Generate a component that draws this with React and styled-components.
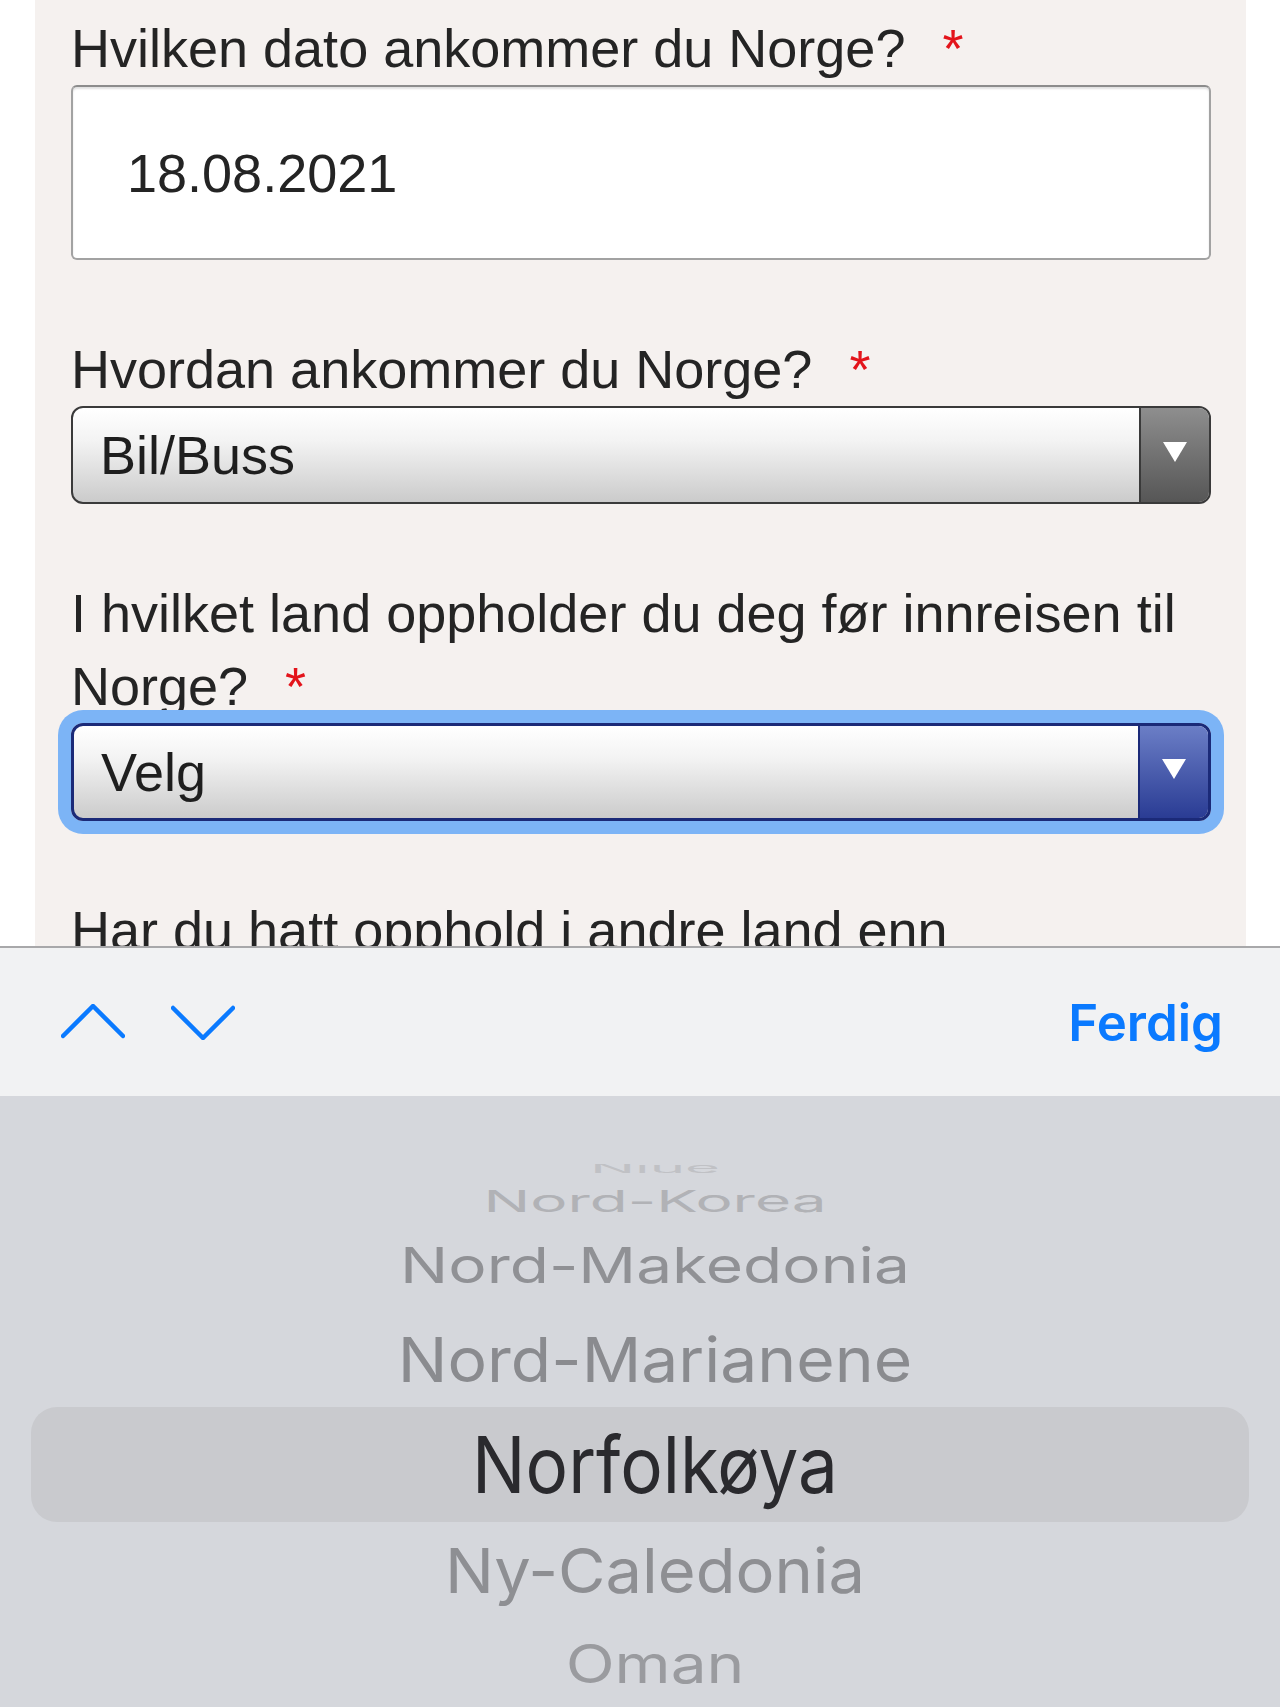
import React from "react";
import styled, { createGlobalStyle } from "styled-components";

const GlobalStyle = createGlobalStyle`
  html, body {
    margin: 0;
    padding: 0;
    background: #ffffff;
  }
  * {
    box-sizing: border-box;
  }
`;

// Screen layout
const Screen = styled.div`
  width: 1280px;
  height: 1707px;
  display: flex;
  flex-direction: column;
  overflow: hidden;
  background: #ffffff;
`;

const FormArea = styled.div`
  height: 946px;
  flex-shrink: 0;
  overflow: hidden;
  padding: 0 34px 0 35px;
`;

const Panel = styled.div`
  background: #f5f1ef;
  min-height: 100%;
  padding: 12px 35px 0 36px;
  display: flex;
  flex-direction: column;
  gap: 73px;
  font-family: "Liberation Sans", Arial, sans-serif;
  color: #242424;
`;

const Field = styled.div`
  display: flex;
  flex-direction: column;
`;

const Label = styled.div`
  font-size: 54px;
  line-height: 73px;
`;

const Req = styled.span`
  color: #e3141b;
  margin-left: 37px;
`;

const TextInput = styled.div`
  height: 175px;
  background: #ffffff;
  border: 2px solid #a2a2a2;
  border-top-color: #8c8c8c;
  border-radius: 6px;
  box-shadow: inset 0 2px 2px rgba(0, 0, 0, 0.12);
  display: flex;
  align-items: center;
  padding-left: 54px;
  font-size: 54px;
`;

const SelectBox = styled.div`
  height: 98px;
  display: flex;
  align-items: stretch;
  border: ${(p) => (p.$focused ? "3px solid #1b2a78" : "2px solid #3a3a3a")};
  border-radius: 12px;
  overflow: hidden;
  background: linear-gradient(#ffffff 0%, #f3f3f3 35%, #cbcbcb 100%);
  box-shadow: ${(p) => (p.$focused ? "0 0 0 13px #7cb4f6" : "none")};
`;

const SelectValue = styled.div`
  flex: 1;
  display: flex;
  align-items: center;
  padding-left: 27px;
  font-size: 54px;
  color: #1e1e1e;
`;

const ArrowCap = styled.div`
  width: 70px;
  flex-shrink: 0;
  display: flex;
  align-items: center;
  justify-content: center;
  border-left: 2px solid ${(p) => (p.$focused ? "#1b2a78" : "#3a3a3a")};
  background: ${(p) =>
    p.$focused
      ? "linear-gradient(#6b7ec6, #2a3c94)"
      : "linear-gradient(#8e8e8e, #565656)"};

  &::after {
    content: "";
    width: 0;
    height: 0;
    border-left: 12px solid transparent;
    border-right: 12px solid transparent;
    border-top: 20px solid #ffffff;
    margin-top: -6px;
  }
`;

// Keyboard accessory bar
const Toolbar = styled.div`
  height: 150px;
  flex-shrink: 0;
  border-top: 2px solid #a8a8aa;
  background: #f1f2f3;
  display: flex;
  align-items: center;
  justify-content: space-between;
  padding: 0 57px 0 61px;
`;

const NavGroup = styled.div`
  display: flex;
  align-items: center;
  gap: 46px;
`;

const NavButton = styled.svg`
  width: 64px;
  height: 36px;
  display: block;
`;

const Done = styled.span`
  font-family: Inter, "Liberation Sans", sans-serif;
  font-weight: 600;
  font-size: 51px;
  color: #0a7aff;
  line-height: 1;
`;

// Wheel picker
const Picker = styled.div`
  flex: 1;
  background: #d5d7dc;
  padding-top: 68px;
  display: flex;
  flex-direction: column;
  font-family: Inter, "Liberation Sans", sans-serif;
`;

const Row = styled.div`
  height: ${(p) => p.$h}px;
  flex-shrink: 0;
  display: flex;
  align-items: ${(p) => (p.$clip ? "flex-start" : "center")};
  justify-content: center;
  overflow: hidden;
  margin: 0 31px;
  padding-left: 30px;
  border-radius: 26px;
  background: ${(p) => (p.$selected ? "#c9cace" : "transparent")};
`;

const RowText = styled.span`
  display: block;
  line-height: 1;
  white-space: nowrap;
  font-size: ${(p) => p.$size}px;
  color: ${(p) => p.$color};
  transform: ${(p) => `translateY(${p.$shift || 0}px) scaleY(${p.$sy})`};
`;

const countries = [
  { name: "Niue", size: 60, sy: 0.22, color: "#c0c1c5", h: 18, clip: true, shift: -26 },
  { name: "Nord-Korea", size: 62, sy: 0.49, color: "#b1b2b6", h: 38 },
  { name: "Nord-Makedonia", size: 64, sy: 0.77, color: "#909195", h: 90 },
  { name: "Nord-Marianene", size: 66, sy: 0.94, color: "#8a8b8f", h: 97 },
  { name: "Norfolkøya", size: 71, sy: 1.1, color: "#2a2a2e", h: 115, selected: true },
  { name: "Ny-Caledonia", size: 65, sy: 0.96, color: "#8e8f93", h: 96 },
  { name: "Oman", size: 64, sy: 0.83, color: "#9a9b9f", h: 92 },
];

const Select = ({ value, focused }) => (
  <SelectBox $focused={focused}>
    <SelectValue>{value}</SelectValue>
    <ArrowCap $focused={focused} />
  </SelectBox>
);

const App = () => {
  return (
    <Screen>
      <GlobalStyle />
      <FormArea>
        <Panel>
          <Field>
            <Label>
              Hvilken dato ankommer du Norge?<Req>*</Req>
            </Label>
            <TextInput>18.08.2021</TextInput>
          </Field>

          <Field>
            <Label>
              Hvordan ankommer du Norge?<Req>*</Req>
            </Label>
            <Select value="Bil/Buss" />
          </Field>

          <Field>
            <Label>
              I hvilket land oppholder du deg før innreisen til Norge?<Req>*</Req>
            </Label>
            <Select value="Velg" focused />
          </Field>

          <Field>
            <Label>
              Har du hatt opphold i andre land enn
              <br />
              Norge de siste 10 dagene?<Req>*</Req>
            </Label>
          </Field>
        </Panel>
      </FormArea>

      <Toolbar>
        <NavGroup>
          <NavButton viewBox="0 0 64 36">
            <polyline
              points="2,32 32,2 62,32"
              fill="none"
              stroke="#0a7aff"
              strokeWidth="4.5"
              strokeLinecap="round"
              strokeLinejoin="round"
            />
          </NavButton>
          <NavButton viewBox="0 0 64 36">
            <polyline
              points="2,4 32,34 62,4"
              fill="none"
              stroke="#0a7aff"
              strokeWidth="4.5"
              strokeLinecap="round"
              strokeLinejoin="round"
            />
          </NavButton>
        </NavGroup>
        <Done>Ferdig</Done>
      </Toolbar>

      <Picker>
        {countries.map((c) => (
          <Row key={c.name} $h={c.h} $selected={c.selected} $clip={c.clip}>
            <RowText $size={c.size} $sy={c.sy} $color={c.color} $shift={c.shift}>
              {c.name}
            </RowText>
          </Row>
        ))}
      </Picker>
    </Screen>
  );
};

export default App;
